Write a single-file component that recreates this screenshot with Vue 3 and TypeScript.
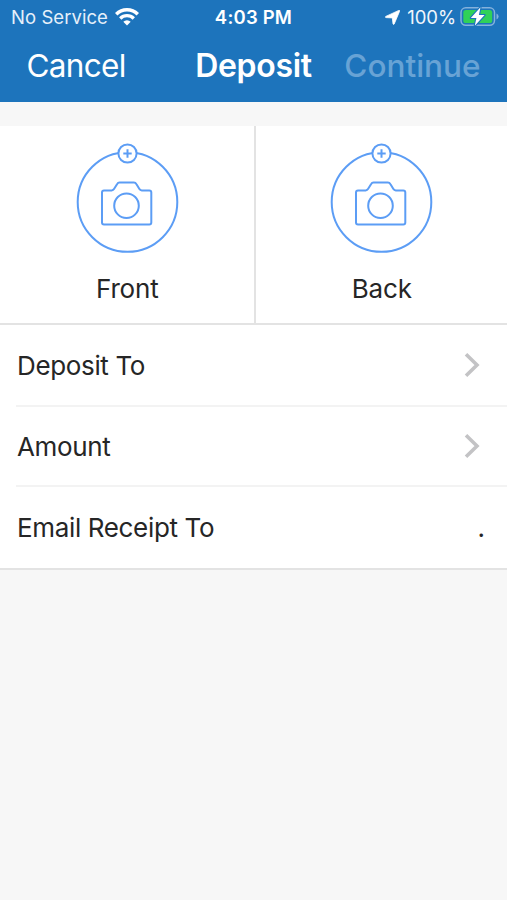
<script setup lang="ts">
interface Row {
  id: string
  label: string
  value?: string
}

const captures: string[] = ['Front', 'Back']

const rows: Row[] = [
  { id: 'account', label: 'Deposit To' },
  { id: 'amount', label: 'Amount' },
  { id: 'email', label: 'Email Receipt To', value: '.' },
]
</script>

<template>
  <main class="screen">
    <header class="header">
      <div class="status">
        <div class="status-left">
          <span class="carrier">No Service</span>
          <svg class="wifi" width="24" height="18" viewBox="0 0 24 18" fill="none" stroke="#fff">
            <path d="M1.2 6.2A15.4 15.4 0 0 1 22.8 6.2" stroke-width="3.5" />
            <path d="M5.2 10.5A9.7 9.7 0 0 1 18.8 10.5" stroke-width="3.3" />
            <path d="M12 17.4L8.3 13.7A5.3 5.3 0 0 1 15.7 13.7Z" fill="#fff" stroke="none" />
          </svg>
        </div>
        <span class="time">4:03 PM</span>
        <div class="status-right">
          <svg class="location" width="15" height="15" viewBox="0 0 15 15">
            <path d="M13.800 .4Q15 0 14.600 1.200L9.200 14Q8.600 15.200 8 13.800L7.300 7.900L1 7.600Q-.4 7.300 .8 6.400Z" fill="#fff" stroke="#fff" stroke-width=".8" />
          </svg>
          <span class="percent">100%</span>
          <svg class="battery" width="40" height="22" viewBox="0 0 40 22">
            <rect x="1" y="1.800" width="33.500" height="17.500" rx="4.800" fill="none" stroke="#84b1dc" stroke-width="1.500" />
            <path d="M36.500 7.600Q38.600 8.400 38.600 10.600T36.500 13.600Z" fill="#84b1dc" />
            <rect x="3.300" y="4.100" width="28.900" height="12.900" rx="2.600" fill="#30d158" />
            <path d="M20.500 1.300L10.800 12H16.400L14.800 19.800L24.600 9.100H18.900Z" fill="#fff" stroke="#1d74bc" stroke-width="2.200" paint-order="stroke" stroke-linejoin="round" />
          </svg>
        </div>
      </div>
      <nav class="nav">
        <button class="cancel">Cancel</button>
        <h1 class="title">Deposit</h1>
        <button class="continue" disabled>Continue</button>
      </nav>
    </header>

    <section class="captures">
      <div v-for="side in captures" :key="side" class="capture">
        <svg class="camera" width="104" height="112" viewBox="0 0 104 112" fill="none" stroke="#5c9df5" stroke-width="2">
          <circle cx="52.500" cy="60" r="49.800" />
          <circle cx="52.500" cy="11.500" r="9.100" fill="#fff" />
          <path d="M52.500 7.300V15.700M48.300 11.500H56.700" />
          <path d="M29 48.400H36.700Q38.200 48.400 39 47.100L42 42.200Q43 40.400 44.500 40.400H58.900Q60.500 40.400 61.500 42.200L64.400 47.100Q65.200 48.400 66.700 48.400H74.300Q76.300 48.400 76.300 50.400V80.500Q76.300 82.500 74.300 82.500H29Q27 82.500 27 80.500V50.400Q27 48.400 29 48.400Z" />
          <circle cx="51.500" cy="63.700" r="12.300" />
        </svg>
        <span class="side">{{ side }}</span>
      </div>
    </section>

    <section class="rows">
      <div v-for="row in rows" :key="row.id" class="row">
        <span :class="['label', row.id]">{{ row.label }}</span>
        <span v-if="row.value" class="value">{{ row.value }}</span>
        <svg v-else class="chevron" width="16" height="26" viewBox="0 0 16 26" fill="none" stroke="#c3c3c5" stroke-width="3.600">
          <path d="M2 2.200L13 13L2 23.800" />
        </svg>
      </div>
    </section>
  </main>
</template>

<style>
body {
  margin: 0;
  background: #f7f7f7;
}
</style>

<style scoped>
.screen {
  min-height: 900px;
  background: #f7f7f7;
  color: #262626;
  font-family: Inter, "Liberation Sans", sans-serif;
  font-size: 26px;
  line-height: 32px;
  white-space: nowrap;
}

.header {
  box-sizing: border-box;
  height: 102px;
  background: #1d74bc;
  color: #fff;
}

.status {
  display: grid;
  grid-template-columns: 1fr auto 1fr;
  height: 34px;
  padding: 0 7px 0 11px;
  align-items: center;
  font-size: 18.5px;
}

.status-left,
.status-right {
  display: flex;
  align-items: center;
}

.status-right {
  justify-content: flex-end;
}

.carrier {
  margin-right: 7px;
  color: #e6f0fa;
  letter-spacing: 0.05px;
}

.location {
  margin-right: 7px;
}

.percent {
  margin-right: 4px;
  color: #f0f6fc;
  letter-spacing: -0.1px;
}

.time {
  margin-left: -4px;
  font-weight: 600;
  letter-spacing: 0.2px;
}

.nav {
  display: grid;
  grid-template-columns: 1fr auto 1fr;
  align-items: center;
  height: 63px;
  padding: 0 26.5px;
}

.nav button {
  padding: 0;
  border: 0;
  background: none;
  color: inherit;
  font: inherit;
  font-size: 31.5px;
}

.nav .cancel {
  justify-self: start;
  letter-spacing: -0.7px;
}

.title {
  margin: 0;
  font-size: 32px;
  font-weight: 600;
  letter-spacing: -0.3px;
}

.nav .continue {
  justify-self: end;
  color: #68a3d5;
  font-weight: 500;
}

.captures {
  display: grid;
  grid-template-columns: 1fr 1fr;
  height: 197px;
  margin-top: 24px;
  border-bottom: 2px solid #e3e3e3;
  background: #fff;
}

.capture {
  display: flex;
  flex-direction: column;
  align-items: center;
  box-sizing: border-box;
  padding-top: 16px;
}

.capture + .capture {
  border-left: 2px solid #e3e3e3;
}

.side {
  margin: 19px 0 0 1px;
  letter-spacing: -0.2px;
}

.rows {
  border-bottom: 2px solid #e3e3e3;
  background: #fff;
}

.row {
  display: flex;
  align-items: center;
  justify-content: space-between;
  box-sizing: border-box;
  height: 82px;
  margin-left: 16px;
  padding: 0 27px 0 1px;
  border-bottom: 2px solid #f3f3f3;
}

.row:nth-child(2) {
  height: 80px;
}

.row:last-child {
  height: 81px;
  border-bottom: 0;
}

.label {
  padding-top: 1px;
  letter-spacing: -0.35px;
}

.value {
  margin-right: -5px;
  padding-top: 1px;
}
</style>
